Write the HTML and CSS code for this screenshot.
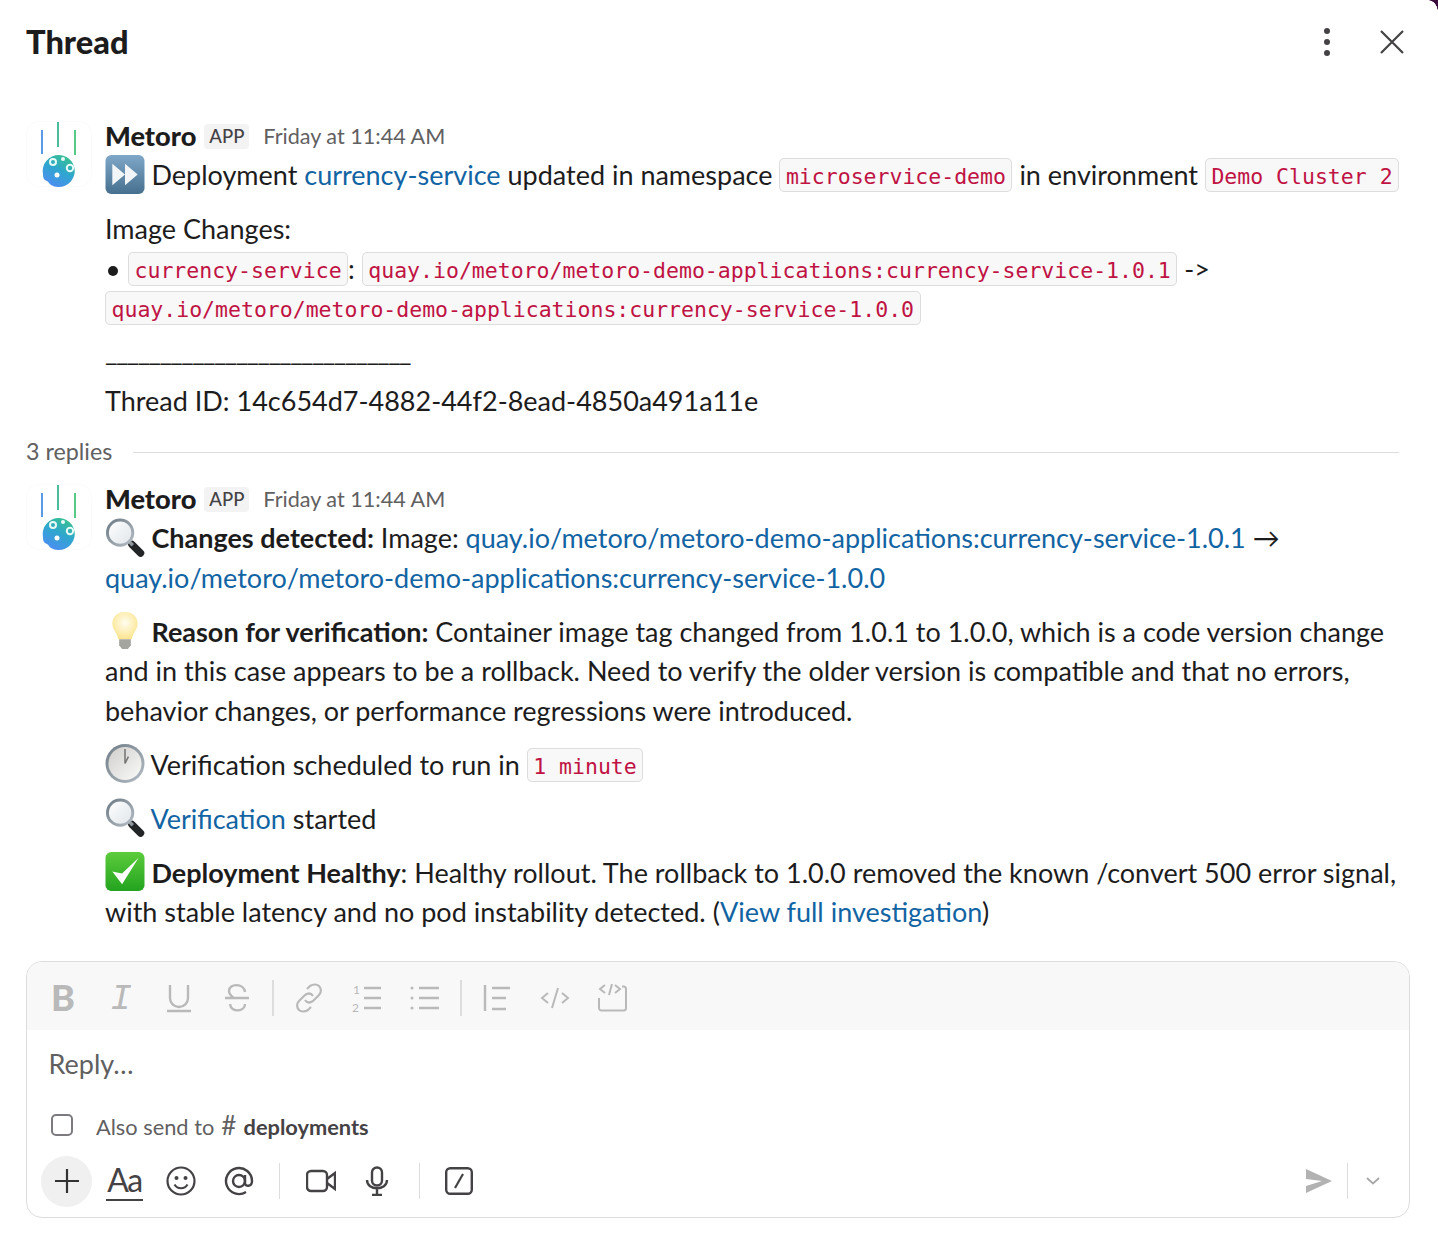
FILE: index.html
```html
<!DOCTYPE html>
<html lang="en">
<head>
  <meta charset="UTF-8" />
  <title>Thread</title>
  <link rel="stylesheet" href="styles.css">
</head>
<body>
  <svg class="defs" width="0" height="0">
    <defs>
      <linearGradient id="ball" x1="0.8" y1="0" x2="0.3" y2="1">
        <stop offset="0" stop-color="#38c38a"/>
        <stop offset="0.5" stop-color="#2fa6cf"/>
        <stop offset="1" stop-color="#4d8df2"/>
      </linearGradient>
      <linearGradient id="lens" x1="0" y1="0" x2="1" y2="1">
        <stop offset="0" stop-color="#ffffff"/>
        <stop offset="1" stop-color="#dfe5ea"/>
      </linearGradient>
      <linearGradient id="rim" x1="0" y1="0" x2="1" y2="1">
        <stop offset="0" stop-color="#6f7c86"/>
        <stop offset="1" stop-color="#b5bdc4"/>
      </linearGradient>
      <linearGradient id="face" x1="0" y1="0" x2="1" y2="1">
        <stop offset="0" stop-color="#cfcecb"/>
        <stop offset="1" stop-color="#fbfbfa"/>
      </linearGradient>
      <linearGradient id="blue-key" x1="0" y1="0" x2="0" y2="1">
        <stop offset="0" stop-color="#7ea7c8"/>
        <stop offset="1" stop-color="#47708f"/>
      </linearGradient>
      <linearGradient id="green-key" x1="0" y1="0" x2="0" y2="1">
        <stop offset="0" stop-color="#5ccc3c"/>
        <stop offset="1" stop-color="#23a31f"/>
      </linearGradient>
      <radialGradient id="bulb" cx="0.5" cy="0.4" r="0.6">
        <stop offset="0" stop-color="#fffdf0"/>
        <stop offset="1" stop-color="#fbe58f"/>
      </radialGradient>
      <symbol id="avatar" viewBox="0 0 66 66">
        <rect x="0.5" y="0.5" width="65" height="65" rx="12" fill="#fff" stroke="#fbfbfb"/>
        <path d="M16 9v24" stroke="#5a9be8" stroke-width="2"/>
        <path d="M32 1v25" stroke="#4cbd9c" stroke-width="2"/>
        <path d="M49 9v25" stroke="#55cb86" stroke-width="2"/>
        <path d="M33 34a16 16 0 1 1-8 30c-2-1-2-3-4-4-3-1-4-3-4-7a16 16 0 0 1 16-19z" fill="url(#ball)"/>
        <circle cx="27" cy="41" r="3" fill="none" stroke="#e8fbf6" stroke-width="2"/>
        <circle cx="37" cy="38" r="2" fill="#e8fbf6"/>
        <circle cx="44" cy="47" r="3.200" fill="none" stroke="#e8fbf6" stroke-width="2"/>
        <circle cx="31" cy="54" r="2.500" fill="#fff"/>
      </symbol>
      <symbol id="magnifier" viewBox="0 0 40 40">
        <path d="M27 27l9 9" stroke="#222426" stroke-width="7.500" stroke-linecap="round"/>
        <path d="M24 24l4 4" stroke="#8f979c" stroke-width="3.500"/>
        <circle cx="15" cy="15" r="13" fill="url(#lens)" stroke="url(#rim)" stroke-width="3"/>
      </symbol>
      <symbol id="clock" viewBox="0 0 40 40">
        <circle cx="20" cy="20" r="20" fill="url(#rim)"/>
        <circle cx="20" cy="20" r="17" fill="url(#face)"/>
        <path d="M20 5v15l3.500-7" stroke="#777" stroke-width="1.600" fill="none"/>
      </symbol>
    </defs>
  </svg>

  <div class="corner"></div>

  <header class="thread-header">
    <h1>Thread</h1>
    <div class="header-icons">
      <svg width="10" height="32" viewBox="0 0 10 32"><circle cx="5" cy="5" r="3" fill="#454245"/><circle cx="5" cy="16" r="3" fill="#454245"/><circle cx="5" cy="27" r="3" fill="#454245"/></svg>
      <svg width="24" height="24" viewBox="0 0 24 24"><path d="M1 1l22 22M23 1L1 23" stroke="#454245" stroke-width="2.200" fill="none"/></svg>
    </div>
  </header>

  <main class="messages">
    <article class="message">
      <svg class="avatar"><use href="#avatar"/></svg>
      <div class="message-body">
        <div class="meta"><span class="sender">Metoro</span><span class="app-tag">APP</span><span class="time">Friday at 11:44 AM</span></div>
        <p><svg class="emoji" viewBox="0 0 40 40"><rect width="40" height="40" rx="6" fill="url(#blue-key)"/><path d="M7 9l13 11L7 31zM20 9l13 11-13 11z" fill="#f2f6f9"/></svg> Deployment <a href="#">currency-service</a> updated in namespace <code>microservice-demo</code> in environment <code>Demo Cluster 2</code></p>
        <p class="gap">Image Changes:</p>
        <p><span class="dot"></span><code>currency-service</code>: <code>quay.io/metoro/metoro-demo-applications:currency-service-1.0.1</code> -&gt; <code>quay.io/metoro/metoro-demo-applications:currency-service-1.0.0</code></p>
        <p class="rule">____________________________</p>
        <p class="gap-small">Thread ID: 14c654d7-4882-44f2-8ead-4850a491a11e</p>
      </div>
    </article>

    <div class="replies-divider"><span>3 replies</span><hr></div>

    <article class="message">
      <svg class="avatar"><use href="#avatar"/></svg>
      <div class="message-body">
        <div class="meta"><span class="sender">Metoro</span><span class="app-tag">APP</span><span class="time">Friday at 11:44 AM</span></div>
        <p><svg class="emoji"><use href="#magnifier"/></svg> <strong>Changes detected:</strong> Image: <a href="#">quay.io/metoro/metoro-demo-applications:currency-service-1.0.1</a> → <a href="#">quay.io/metoro/metoro-demo-applications:currency-service-1.0.0</a></p>
        <p class="gap"><svg class="emoji" viewBox="0 0 40 40"><path d="M20 1c-8 0-13 5-13 12 0 6 5 9 6 16h14c1-7 6-10 6-16 0-7-5-12-13-12z" fill="url(#bulb)"/><path d="M14 29h12v6l-3 4h-6l-3-4z" fill="#a5a5a0"/></svg> <strong>Reason for verification:</strong> Container image tag changed from 1.0.1 to 1.0.0, which is a code version change and in this case appears to be a rollback. Need to verify the older version is compatible and that no errors, behavior changes, or performance regressions were introduced.</p>
        <p class="gap"><svg class="emoji"><use href="#clock"/></svg> Verification scheduled to run in <code>1 minute</code></p>
        <p class="gap"><svg class="emoji"><use href="#magnifier"/></svg> <a href="#">Verification</a> started</p>
        <p class="gap"><svg class="emoji" viewBox="0 0 40 40"><rect width="40" height="40" rx="6" fill="url(#green-key)"/><path d="M7 20l10 13L34 6 17 22z" fill="#fff"/></svg> <strong>Deployment Healthy</strong>: Healthy rollout. The rollback to 1.0.0 removed the known /convert 500 error signal, with stable latency and no pod instability detected. (<a href="#">View full investigation</a>)</p>
      </div>
    </article>
  </main>

  <section class="composer">
    <div class="format-bar">
      <span class="tool"><span class="glyph-bold">B</span></span>
      <span class="tool"><span class="glyph-italic">I</span></span>
      <span class="tool"><svg width="26" height="30" viewBox="0 0 26 30"><path d="M4 2v13a9 9 0 0 0 18 0V2M1 28h24" stroke="#b9b9b9" stroke-width="2.400" fill="none"/></svg></span>
      <span class="tool"><svg width="26" height="30" viewBox="0 0 26 30"><path d="M21 9c-1-9-16-9-16-1 0 3 2 5 5 7M6 21c1 9 15 8 15 0M1 15h24" stroke="#b9b9b9" stroke-width="2.400" fill="none"/></svg></span>
      <span class="tool-sep"></span>
      <span class="tool"><svg width="30" height="30" viewBox="0 0 30 30"><path d="M13 6l3-3c3-2 7-2 9 0s3 6 0 9l-6 6c-3 2-6 2-8-1M17 24l-3 3c-3 2-7 2-9 0s-3-6 0-9l6-6c3-2 6-2 8 1" stroke="#b9b9b9" stroke-width="2.200" fill="none"/></svg></span>
      <span class="tool"><svg width="30" height="30" viewBox="0 0 30 30"><path d="M12 5h17M12 15h17M12 25h17" stroke="#b9b9b9" stroke-width="2.400"/><text x="1" y="11" class="tiny-num">1</text><text x="0" y="29" class="tiny-num">2</text></svg></span>
      <span class="tool"><svg width="30" height="28" viewBox="0 0 30 28"><path d="M9 4h20M9 14h20M9 24h20" stroke="#b9b9b9" stroke-width="2.400"/><circle cx="2" cy="4" r="1.500" fill="#b9b9b9"/><circle cx="2" cy="14" r="1.500" fill="#b9b9b9"/><circle cx="2" cy="24" r="1.500" fill="#b9b9b9"/></svg></span>
      <span class="tool-sep"></span>
      <span class="tool"><svg width="28" height="28" viewBox="0 0 28 28"><path d="M2 1v26M9 4h18M9 14h14M9 25h14" stroke="#b9b9b9" stroke-width="2.400"/></svg></span>
      <span class="tool"><svg width="30" height="24" viewBox="0 0 30 24"><path d="M8 7l-6 5 6 5M22 7l6 5-6 5M18 2l-6 20" stroke="#b9b9b9" stroke-width="2" fill="none"/></svg></span>
      <span class="tool"><svg width="30" height="28" viewBox="0 0 30 28"><path d="M7 1L2 5l5 4M14 0l-3 11M17 1l5 4-5 4M1 14v10a2.500 2.500 0 0 0 2.500 2.500h22a2.500 2.500 0 0 0 2.500-2.500V5a2.500 2.500 0 0 0-2.500-2.500H24" stroke="#b9b9b9" stroke-width="2" fill="none"/></svg></span>
    </div>

    <div class="reply-input">Reply…</div>

    <label class="also-send"><span class="checkbox"></span><span>Also send to <span class="hash">#</span> <b>deployments</b></span></label>

    <div class="composer-actions">
      <span class="plus"><svg width="26" height="26" viewBox="0 0 26 26"><path d="M13 1v24M1 13h24" stroke="#333" stroke-width="2.200"/></svg></span>
      <span class="aa">Aa</span>
      <span class="action action-first"><svg width="30" height="30" viewBox="0 0 30 30"><circle cx="15" cy="15" r="13.500" fill="none" stroke="#454245" stroke-width="2.200"/><circle cx="10.500" cy="12" r="2" fill="#454245"/><circle cx="19.500" cy="12" r="2" fill="#454245"/><path d="M8.500 18.500c3 5 10 5 13 0" fill="none" stroke="#454245" stroke-width="2.200"/></svg></span>
      <span class="action"><svg width="30" height="30" viewBox="0 0 30 30"><circle cx="15" cy="15" r="6" fill="none" stroke="#454245" stroke-width="2.400"/><path d="M21 9v8c0 4 7 4 7-2a13 13 0 1 0-6 11" fill="none" stroke="#454245" stroke-width="2.400"/></svg></span>
      <span class="action-sep"></span>
      <span class="action"><svg width="30" height="24" viewBox="0 0 30 24"><rect x="1" y="2" width="20" height="20" rx="4" fill="none" stroke="#454245" stroke-width="2.400"/><path d="M21 10l8-6v16l-8-6" fill="none" stroke="#454245" stroke-width="2.400"/></svg></span>
      <span class="action action-mic"><svg width="24" height="30" viewBox="0 0 24 30"><rect x="7" y="1.500" width="10" height="18" rx="5" fill="none" stroke="#454245" stroke-width="2.400"/><path d="M2 14c0 11 20 11 20 0M12 23v6M7 29h10" fill="none" stroke="#454245" stroke-width="2.400"/></svg></span>
      <span class="action-sep"></span>
      <span class="action action-slash"><svg width="28" height="28" viewBox="0 0 28 28"><rect x="1.200" y="1.200" width="25.600" height="25.600" rx="4" fill="none" stroke="#454245" stroke-width="2.400"/><path d="M18 7L10 21" stroke="#454245" stroke-width="2.200"/></svg></span>
      <span class="send-group">
        <svg width="26" height="26" viewBox="0 0 26 26"><path d="M0 1l26 12L0 25v-7l16-5-16-2z" fill="#b2b2b2"/></svg>
        <span class="send-sep"></span>
        <svg width="14" height="8" viewBox="0 0 14 8"><path d="M1 1l6 5.500L13 1" fill="none" stroke="#a8a8a8" stroke-width="1.800"/></svg>
      </span>
    </div>
  </section>
</body>
</html>
```

FILE: styles.css
```css
* {
  box-sizing: border-box;
  margin: 0;
  padding: 0;
}

body {
  font-family: 'Lato', 'Noto Sans', sans-serif;
  font-size: 27px;
  line-height: 39.500px;
  color: #1d1c1d;
  background-color: white;
  width: 1438px;
  height: 1238px;
  overflow: hidden;
  position: relative;
}

.defs {
  position: absolute;
}

.corner {
  position: absolute;
  top: 0;
  right: 0;
  width: 10px;
  height: 12px;
  background: radial-gradient(ellipse 10px 12px at 0 100%, white 96%, #3b0d3f 100%);
}

.thread-header {
  height: 84px;
  padding: 0 34px 0 26px;
  display: flex;
  align-items: center;
  justify-content: space-between;
}

.thread-header h1 {
  font-size: 32.600px;
  font-weight: 900;
  line-height: 40px;
}

.header-icons {
  display: flex;
  align-items: center;
  gap: 48px;
}

.messages {
  padding: 36px 34px 0 26px;
}

.message {
  display: flex;
  gap: 13px;
}

.avatar {
  width: 66px;
  height: 66px;
  flex-shrink: 0;
  margin-top: 1px;
}

.message-body {
  flex: 1;
  min-width: 0;
}

.meta {
  display: flex;
  align-items: center;
  height: 35px;
  padding-bottom: 3px;
}

.sender {
  font-weight: 900;
  font-size: 27.200px;
}

.app-tag {
  margin-left: 8px;
  padding: 0 5px;
  font-size: 18.500px;
  line-height: 25px;
  color: #454245;
  background-color: #f3f3f3;
  border-radius: 4px;
  font-weight: 500;
}

.time {
  margin: 2px 0 0 14px;
  font-size: 21.600px;
  color: #616061;
}

.gap {
  margin-top: 14.500px;
}

.gap-small {
  margin-top: 8px;
}

a {
  color: #1264a3;
  text-decoration: none;
}

strong {
  font-weight: 700;
}

code {
  font-family: 'DejaVu Sans Mono', 'Liberation Mono', monospace;
  font-size: 21.500px;
  line-height: 1;
  color: #c01343;
  background-color: #f8f8f8;
  border: 1px solid #dddddd;
  border-radius: 5px;
  padding: 4.500px 5.500px 2.500px;
  vertical-align: 1.500px;
}

.emoji {
  width: 40px;
  height: 39px;
  margin: -4px -0.500px 0 0;
  vertical-align: -8.500px;
}

.dot {
  display: inline-block;
  width: 10px;
  height: 10px;
  border-radius: 50%;
  background-color: #1d1c1d;
  margin: 0 10px 3px 3px;
}

.rule {
  line-height: 45.500px;
  letter-spacing: -1.500px;
}

.replies-divider {
  display: flex;
  align-items: center;
  gap: 21px;
  margin: 11.500px 5px 0 0;
  height: 40px;
  font-size: 23.300px;
  color: #616061;
}

.replies-divider hr {
  flex: 1;
  border: none;
  border-top: 1px solid #dddddd;
}

.replies-divider + .message {
  margin-top: 11px;
}

.composer {
  width: 1384px;
  height: 257px;
  margin: 29px 0 0 26px;
  border: 1px solid #dddddd;
  border-radius: 16px;
  overflow: hidden;
}

.format-bar {
  height: 68px;
  padding: 4px 0 0 7px;
  background-color: #f8f8f8;
  display: flex;
  align-items: center;
}

.tool {
  width: 58px;
  display: flex;
  justify-content: center;
  align-items: center;
}

.tool-sep {
  width: 2px;
  height: 36px;
  margin: 0 6px;
  background-color: #dddddd;
}

.glyph-bold {
  font-size: 36px;
  font-weight: 900;
  color: #b9b9b9;
}

.glyph-italic {
  font-family: 'Liberation Mono', monospace;
  font-style: italic;
  font-size: 36px;
  color: #b9b9b9;
  margin-top: 5px;
}

.tiny-num {
  font-size: 12px;
  fill: #b9b9b9;
}

.reply-input {
  padding: 14px 21.500px 0;
  color: #616061;
}

.also-send {
  display: flex;
  align-items: center;
  margin-top: 28px;
  padding-left: 24px;
  font-size: 21.800px;
  line-height: 28px;
  color: #616061;
}

.also-send b {
  font-weight: 700;
  color: #454245;
}

.hash {
  font-size: 26px;
  margin: 0 1.500px;
}

.checkbox {
  width: 22px;
  height: 22px;
  border: 2px solid #7c7a7f;
  border-radius: 5px;
  margin-right: 23px;
  margin-top: -3px;
}

.composer-actions {
  display: flex;
  align-items: center;
  height: 52px;
  margin-top: 14px;
  padding: 0 29px 0 14px;
}

.plus {
  width: 51px;
  height: 51px;
  border-radius: 50%;
  background-color: #f0f0f0;
  display: flex;
  align-items: center;
  justify-content: center;
}

.aa {
  margin-left: 14px;
  font-size: 32px;
  line-height: 38px;
  color: #454245;
  border-bottom: 2px solid #454245;
  width: 37px;
  text-align: center;
  letter-spacing: -1.500px;
}

.action {
  width: 58px;
  display: flex;
  justify-content: center;
}

.action-first {
  margin-left: 9px;
}

.action-mic {
  margin: 0 2px 0 -2px;
}

.action-slash {
  margin-left: -2px;
}

.action-sep {
  width: 1px;
  height: 36px;
  margin: 0 12px 0 11px;
  background-color: #dddddd;
}

.send-group {
  margin-left: auto;
  display: flex;
  align-items: center;
  gap: 15px;
}

.send-sep {
  width: 1px;
  height: 36px;
  background-color: #dddddd;
  margin-right: 3px;
}
```
